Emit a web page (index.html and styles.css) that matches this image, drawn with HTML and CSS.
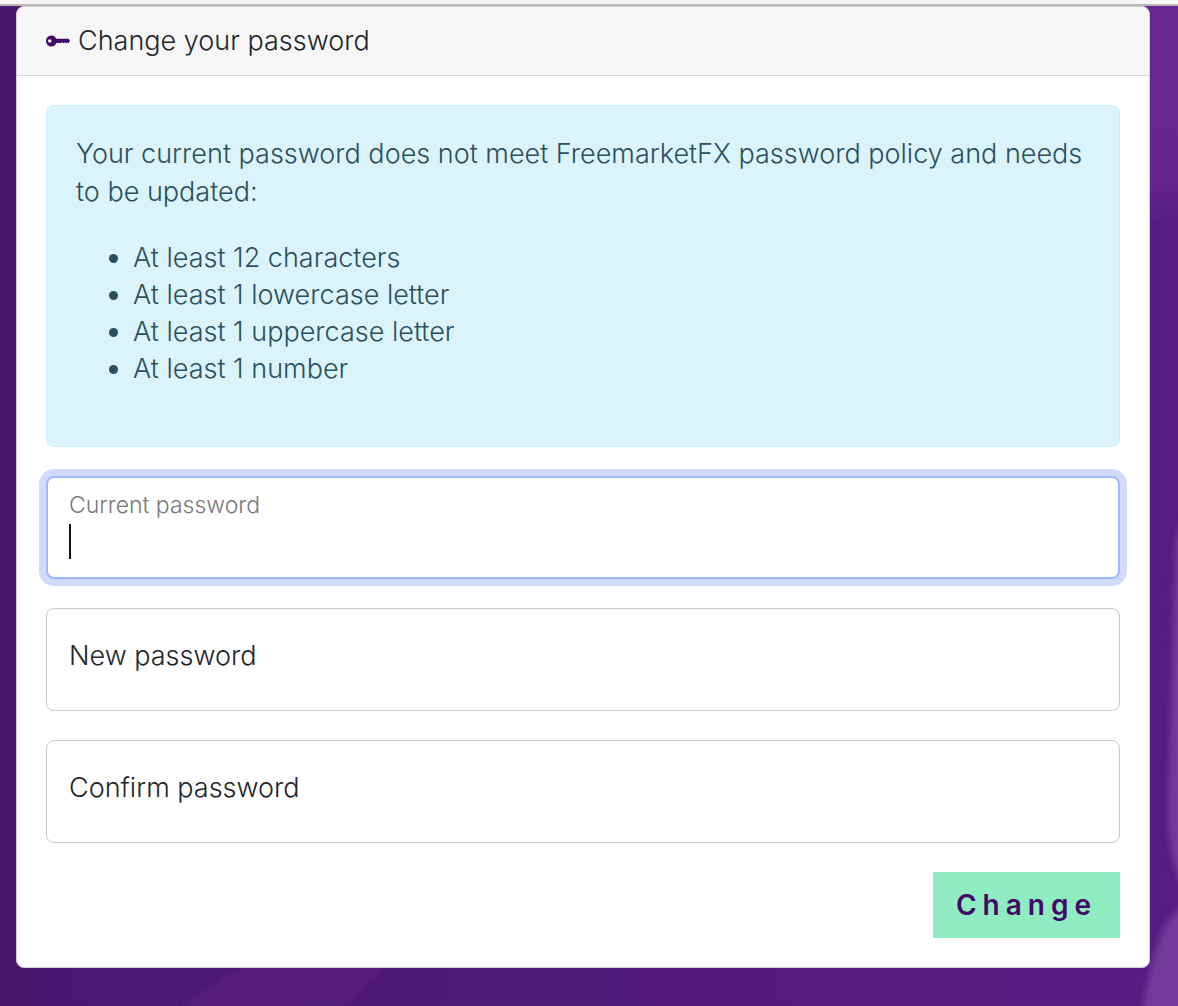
FILE: index.html
```
<!DOCTYPE html>
<html lang="en">

<head>
    <meta charset="utf-8">
    <meta name="viewport" content="width=device-width, initial-scale=1">
    <title>Change your password</title>
    <link rel="stylesheet" href="styles.css">
</head>

<body>
    <svg class="backdrop" viewBox="0 0 1178 1006" preserveAspectRatio="none" aria-hidden="true">
        <defs>
            <linearGradient id="base" x1="0" y1="0" x2="1" y2="0">
                <stop offset="0" stop-color="#4b176f" />
                <stop offset="1" stop-color="#551c82" />
            </linearGradient>
            <linearGradient id="glow" x1="0" y1="0" x2="0" y2="1">
                <stop offset="0" stop-color="#67278f" />
                <stop offset="0.8" stop-color="#65268e" />
                <stop offset="1" stop-color="#581d84" />
            </linearGradient>
            <filter id="soft">
                <feGaussianBlur stdDeviation="3" />
            </filter>
        </defs>
        <rect width="1178" height="1006" fill="url(#base)" />
        <rect x="1140" width="38" height="222" fill="url(#glow)" />
        <path d="M180 1006L250 960H395L345 1006Z" fill="#551d7b" filter="url(#soft)" />
        <path d="M1190 500L1176 540L1168 800Q1166 866 1190 900Z" fill="#75399b" filter="url(#soft)" />
        <path d="M1142 1015Q1152 940 1172 915L1195 895V1015Z" fill="#75399b" filter="url(#soft)" />
    </svg>
    <div class="topbar"></div>
    <main class="page">
        <form class="card">
            <h1 class="card-header">
                <svg class="key" viewBox="0 0 24 12" aria-hidden="true">
                    <path fill-rule="evenodd" d="M5.500 0.500C8 0.500 9.500 1.800 10.200 3.800H22.500L24 5.500L22.800 8H21.800L21.200 7L20.500 8.200H19.500L18.800 7L18.100 8.200H17.100L16.400 7L15.500 8H10.200C9.500 10 8 11.500 5.500 11.500A5.500 5.500 0 0 1 5.500 0.500ZM3.800 4.200A1.800 1.800 0 1 0 3.800 7.800A1.800 1.800 0 1 0 3.800 4.200Z" />
                </svg>
                Change your password
            </h1>
            <div class="card-body">
                <div class="alert">
                    <p>Your current password does not meet FreemarketFX password policy and needs to be updated:</p>
                    <ul>
                        <li>At least 12 characters</li>
                        <li>At least 1 lowercase letter</li>
                        <li>At least 1 uppercase letter</li>
                        <li>At least 1 number</li>
                    </ul>
                </div>
                <div class="field active">
                    <input type="password" id="current" autofocus>
                    <label for="current">Current password</label>
                    <span class="caret"></span>
                </div>
                <div class="field">
                    <input type="password" id="new">
                    <label for="new">New password</label>
                </div>
                <div class="field">
                    <input type="password" id="confirm">
                    <label for="confirm">Confirm password</label>
                </div>
                <button class="btn" type="submit">Change</button>
            </div>
        </form>
    </main>
</body>

</html>
```
FILE: styles.css
```
* {
    box-sizing: border-box;
}

body {
    margin: 0;
    min-height: 100vh;
    background: #4f1a78;
    color: #212529;
    font-family: Inter, sans-serif;
    font-size: 27px;
    font-weight: 300;
    line-height: 38px;
}

.backdrop {
    position: fixed;
    z-index: -1;
    width: 100%;
    height: 100%;
}

.topbar {
    height: 6px;
    background: #f7f7f7;
    border-bottom: 2px solid #b9b9b9;
}

.page {
    padding: 0 28px 38px 16px;
}

.card {
    background: #fff;
    border: 1px solid #d3cdd9;
    border-radius: 8px;
}

.card-header {
    display: flex;
    align-items: center;
    gap: 8px;
    margin: 0;
    padding: 15px 29px;
    background: #f7f7f7;
    border-bottom: 1px solid #d5d5d5;
    border-radius: 8px 8px 0 0;
    font-size: 27px;
    font-weight: 300;
}

.key {
    width: 24px;
    height: 12px;
    fill: #430867;
}

.card-body {
    display: flex;
    flex-direction: column;
    gap: 29px;
    padding: 29px;
}

.alert {
    padding: 29px 29px 59px;
    background: #dbf4fc;
    border: 1px solid #c8eefa;
    border-radius: 8px;
    color: #2b505d;
}

.alert p {
    margin: 0 0 28px;
}

.alert ul {
    margin: 0;
    padding-left: 57px;
    line-height: 37px;
}

.field {
    position: relative;
}

.field input {
    display: block;
    width: 100%;
    height: 103px;
    padding: 44px 22px 16px;
    border: 1px solid #c3c8d2;
    border-radius: 8px;
    outline: 0;
    background: #fff;
    color: #212529;
    font: inherit;
    caret-color: transparent;
}

.field label {
    position: absolute;
    top: 29px;
    left: 23px;
    pointer-events: none;
}

.field.active input {
    border: 2px solid #9fbafc;
    box-shadow: 0 0 0 7px #d1daff;
}

.field.active label {
    top: 10px;
    color: #77797c;
    font-size: 23px;
}

.caret {
    position: absolute;
    top: 48px;
    left: 23px;
    width: 2px;
    height: 35px;
    background: #111;
}

.btn {
    align-self: flex-end;
    padding: 14px 23px;
    border: 0;
    background: #8eecc0;
    color: #430867;
    font: inherit;
    font-size: 28px;
    font-weight: 600;
    letter-spacing: 6px;
}
```
